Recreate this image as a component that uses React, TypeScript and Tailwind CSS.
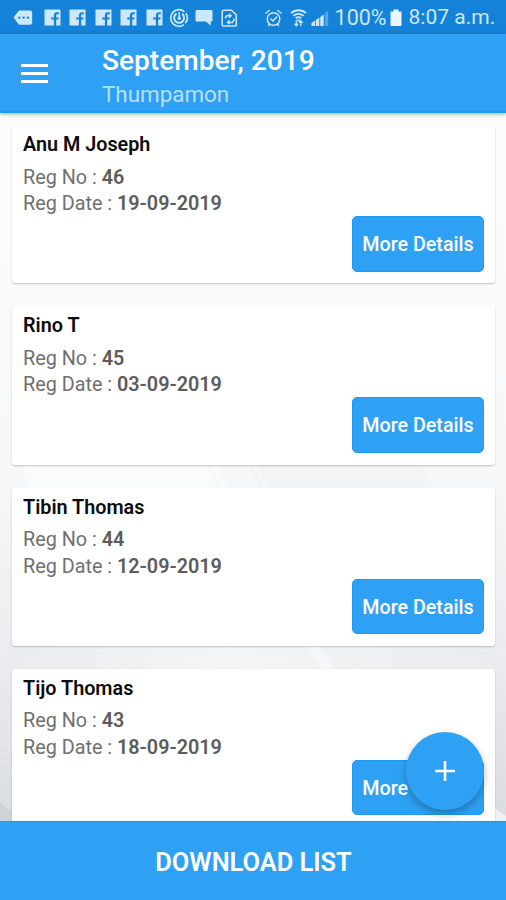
import { clsx } from 'clsx';

interface Registration {
  name: string;
  regNo: number;
  regDate: string;
}

const REGISTRATIONS: Registration[] = [
  { name: 'Anu M Joseph', regNo: 46, regDate: '19-09-2019' },
  { name: 'Rino T', regNo: 45, regDate: '03-09-2019' },
  { name: 'Tibin Thomas', regNo: 44, regDate: '12-09-2019' },
  { name: 'Tijo Thomas', regNo: 43, regDate: '18-09-2019' },
];

function FacebookIcon({ className }: { className?: string }) {
  return (
    <svg viewBox="0 0 17 17" className={clsx('h-[17px] w-[17px] shrink-0', className)}>
      <path
        fill="currentColor"
        d="M.5 .5h16v16h-4.300v-6h2.100l.4-2h-2.500V6.500c0-.8.4-1.200 1.300-1.200h1.300V3.300c-.5-.1-1.100-.1-1.700-.1-2.100 0-3.200 1.200-3.200 3.300v2H7.200v2h2.700v6H.5z"
      />
    </svg>
  );
}

function StatusBar() {
  return (
    <div className="flex h-[34px] shrink-0 items-center bg-[#1382d8] pt-px text-[#cde7fb]">
      <svg viewBox="0 0 20 16" className="ml-[13px] h-4 w-5 shrink-0">
        <path fill="currentColor" d="M6 0.500h11a2.200 2.200 0 0 1 2.200 2.200v9.800a2.200 2.200 0 0 1-2.200 2.200H6L.5 7.600z" />
        <g fill="#1382d8">
          <circle cx="6.300" cy="7.600" r="1.200" />
          <circle cx="10.600" cy="7.600" r="1.200" />
          <circle cx="14.900" cy="7.600" r="1.200" />
        </g>
      </svg>
      <div className="ml-[11px] flex gap-[8.400px]">
        {[0, 1, 2, 3, 4].map((i) => (
          <FacebookIcon key={i} />
        ))}
      </div>
      <svg viewBox="0 0 20 20" fill="none" stroke="currentColor" className="ml-[6px] h-5 w-5 shrink-0">
        <path d="M15.500 3.800A8.300 8.300 0 1 0 15 16.600M16.800 5.300a8.300 8.300 0 0 1-.5 10" strokeWidth="1.700" />
        <path d="M7.500 5.600a5 5 0 1 0 5.500.200" strokeWidth="2" />
        <path d="M10.200 4v5.500" strokeWidth="1.500" />
        <circle cx="10.200" cy="10.200" r="1.700" fill="currentColor" stroke="none" />
      </svg>
      <svg viewBox="0 0 18 17" className="ml-[6px] h-[17px] w-[18px] shrink-0">
        <path fill="currentColor" d="M1.500 1h15a1 1 0 0 1 1 1v9.500a1 1 0 0 1-1 1H15.800V16.800L11 12.500H1.500a1 1 0 0 1-1-1V2a1 1 0 0 1 1-1z" />
      </svg>
      <svg viewBox="0 0 17 18" fill="none" stroke="currentColor" strokeWidth="1.500" className="ml-[8px] h-[18px] w-[17px] shrink-0">
        <path d="M3 1.200h7.500l4.800 4.500v10.200a1 1 0 0 1-1 1H2.200a1 1 0 0 1-1-1V3a1.800 1.800 0 0 1 1.800-1.800z" />
        <path d="M4 9.200l1.800-2.400h3.800M8 4.800l2 2-2 2M13 9.500v1.600l-1.800 2.300H6.500M8.500 11.300l-2 2 2 2" />
      </svg>

      <svg viewBox="0 0 17 18" fill="none" stroke="currentColor" strokeWidth="1.500" strokeLinecap="round" className="ml-[27px] h-[18px] w-[17px] shrink-0">
        <circle cx="8.500" cy="10" r="6.300" />
        <path d="M1 4l3.200-2.500M16 4l-3.200-2.500M5.800 10l2.200 2 3.600-4M3.500 16.500l1-1.500M13.500 16.500l-1-1.500" />
      </svg>
      <svg viewBox="0 0 17 18" fill="none" stroke="currentColor" strokeWidth="1.800" className="ml-[8px] h-[18px] w-[17px] shrink-0">
        <path d="M1 4.200a11 11 0 0 1 15 0M3.300 6.800a7.800 7.800 0 0 1 10.400 0M5.700 9.200a4.500 4.500 0 0 1 5.600 0" />
        <path d="M6.500 10.600h4l-2 2.400z" fill="currentColor" stroke="none" />
        <path d="M6.300 11.200v5.300M4.500 14.800l1.800 1.900 1.800-1.900M10.800 17v-5M9 13.700l1.800-1.900 1.800 1.900" strokeWidth="1.300" />
      </svg>
      <svg viewBox="0 0 18 18" fill="currentColor" className="ml-[4px] h-[18px] w-[18px] shrink-0">
        <path d="M0.500 17v-3l3.500-2.500V17zM4.800 17v-6l3.500-2.500V17zM9.200 17V8l3.500-2.500V17z" />
        <path d="M13.800 17V4.500L17.200 1.500V17z" opacity="0.350" />
      </svg>
      <span className="ml-[6px] w-[55px] text-[21.500px] leading-none whitespace-nowrap">100%</span>
      <svg viewBox="0 0 12 18" className="h-[18px] w-3 shrink-0 text-[#eaf6ff]">
        <path fill="currentColor" d="M3.500 0.500h5v2h2.300q.7 0 .7.700v13.100q0 .7-.7.700H1.200q-.7 0-.7-.7V3.200q0-.7.7-.7h2.300z" />
      </svg>
      <span className="ml-[7px] text-[21px] leading-none whitespace-nowrap">8:07 a.m.</span>
    </div>
  );
}

function Header() {
  return (
    <header className="z-10 flex h-[79px] shrink-0 items-center border-b-2 border-[#199af5] bg-[#2fa1f5] shadow-[0_1px_4px_rgba(0,0,0,0.35)]">
      <button className="ml-[21px] flex w-[27px] flex-col gap-[5px] pt-px" aria-label="Menu">
        <span className="h-[3px] bg-white" />
        <span className="h-[3px] bg-white" />
        <span className="h-[3px] bg-white" />
      </button>
      <div className="ml-[54px] pt-[11px]">
        <h1 className="text-[28.100px] leading-8 font-medium whitespace-nowrap text-white">September, 2019</h1>
        <p className="text-[22.400px] leading-[34px] text-[#b9dffc]">Thumpamon</p>
      </div>
    </header>
  );
}

function RegistrationCard({ registration }: { registration: Registration }) {
  return (
    <article className="flex h-[158.300px] shrink-0 flex-col rounded-[3px] bg-white pt-[7px] pr-[11px] pb-[12px] pl-[11px] shadow-[0_1px_2px_rgba(0,0,0,0.22)]">
      <h2 className="text-[19.800px] leading-[26px] font-semibold text-[#0c0c0c]">{registration.name}</h2>
      <div className="mt-[6.600px] text-[19.800px] leading-[26.500px] text-[#707070]">
        <p>
          Reg No : <span className="font-semibold text-[#5c5c5c]">{registration.regNo}</span>
        </p>
        <p>
          Reg Date : <span className="font-semibold text-[#5c5c5c]">{registration.regDate}</span>
        </p>
      </div>
      <button className="-mt-[1.600px] h-[55.500px] w-[132px] shrink-0 self-end rounded-[5px] border border-[#199af5] bg-[#2fa1f5] pt-[2px] text-[19.700px] font-medium whitespace-nowrap text-white">
        More Details
      </button>
    </article>
  );
}

// Pale wallpaper with faint diagonal folds, seen between the cards
function Wallpaper() {
  return (
    <svg viewBox="0 0 506 708" preserveAspectRatio="none" className="absolute inset-0 h-full w-full">
      <defs>
        <linearGradient id="fade" x1="0" y1="0" x2="0" y2="1">
          <stop offset="0" stopColor="#fcfcfd" />
          <stop offset="0.300" stopColor="#fafafb" />
          <stop offset="0.520" stopColor="#f6f7f8" />
          <stop offset="0.770" stopColor="#eaecef" />
          <stop offset="1" stopColor="#d9dce0" />
        </linearGradient>
        <linearGradient id="glow" x1="0" y1="0" x2="1" y2="0">
          <stop offset="0" stopColor="#f3f5f6" stopOpacity="0" />
          <stop offset="0.450" stopColor="#f3f5f6" />
          <stop offset="1" stopColor="#f3f5f6" stopOpacity="0" />
        </linearGradient>
      </defs>
      <rect width="506" height="708" fill="url(#fade)" />
      <path d="M25 330h180l30 60H25z" fill="#fafbfb" />
      <path d="M240 330h170l30 60H265z" fill="#f2f4f5" />
      <path d="M207 350l12 24M223 350l12 24M239 350l12 24M254 350l12 24" stroke="#f7f8f8" strokeWidth="3" />
      <rect x="12" y="525" width="483" height="40" fill="url(#glow)" />
      <path d="M304 530l18 28h13l-18-28z" fill="#f7f9f9" />
      <path d="M0 599q7 1 12 9M0 607q7 1 12 9M0 615q7 1 12 9M0 623q7 1 12 9M0 631q7 1 12 9M0 639q7 1 12 9M0 647q7 1 12 9" fill="none" stroke="#e9ebee" />
      <path d="M0 690l12 9v9H0z" fill="#cfd3d7" />
      <path d="M495 695l11 8v5h-11z" fill="#eff1f3" />
    </svg>
  );
}

export default function App() {
  return (
    <div className="flex h-[900px] w-[506px] flex-col overflow-hidden font-['Roboto',sans-serif]">
      <StatusBar />
      <Header />
      <main className="relative min-h-0 flex-1">
        <Wallpaper />
        <div className="relative flex h-full flex-col gap-[23px] overflow-hidden pt-[12px] pr-[11px] pl-[12px]">
          {REGISTRATIONS.map((registration) => (
            <RegistrationCard key={registration.regNo} registration={registration} />
          ))}
        </div>
        <button
          aria-label="Add registration"
          className="absolute right-[22px] bottom-[11px] flex h-[78px] w-[78px] items-center justify-center rounded-full bg-[#2fa1f5] shadow-[0_4px_8px_rgba(0,0,0,0.28)]"
        >
          <svg viewBox="0 0 20 20" className="h-5 w-5">
            <path d="M10 0v20M0 10h20" stroke="#fff" strokeWidth="2.600" />
          </svg>
        </button>
      </main>
      <button className="h-[79px] shrink-0 border-t border-[#199af5] bg-[#2fa1f5] pt-[3px] pl-px text-[25.400px] font-semibold text-white">
        DOWNLOAD LIST
      </button>
    </div>
  );
}
